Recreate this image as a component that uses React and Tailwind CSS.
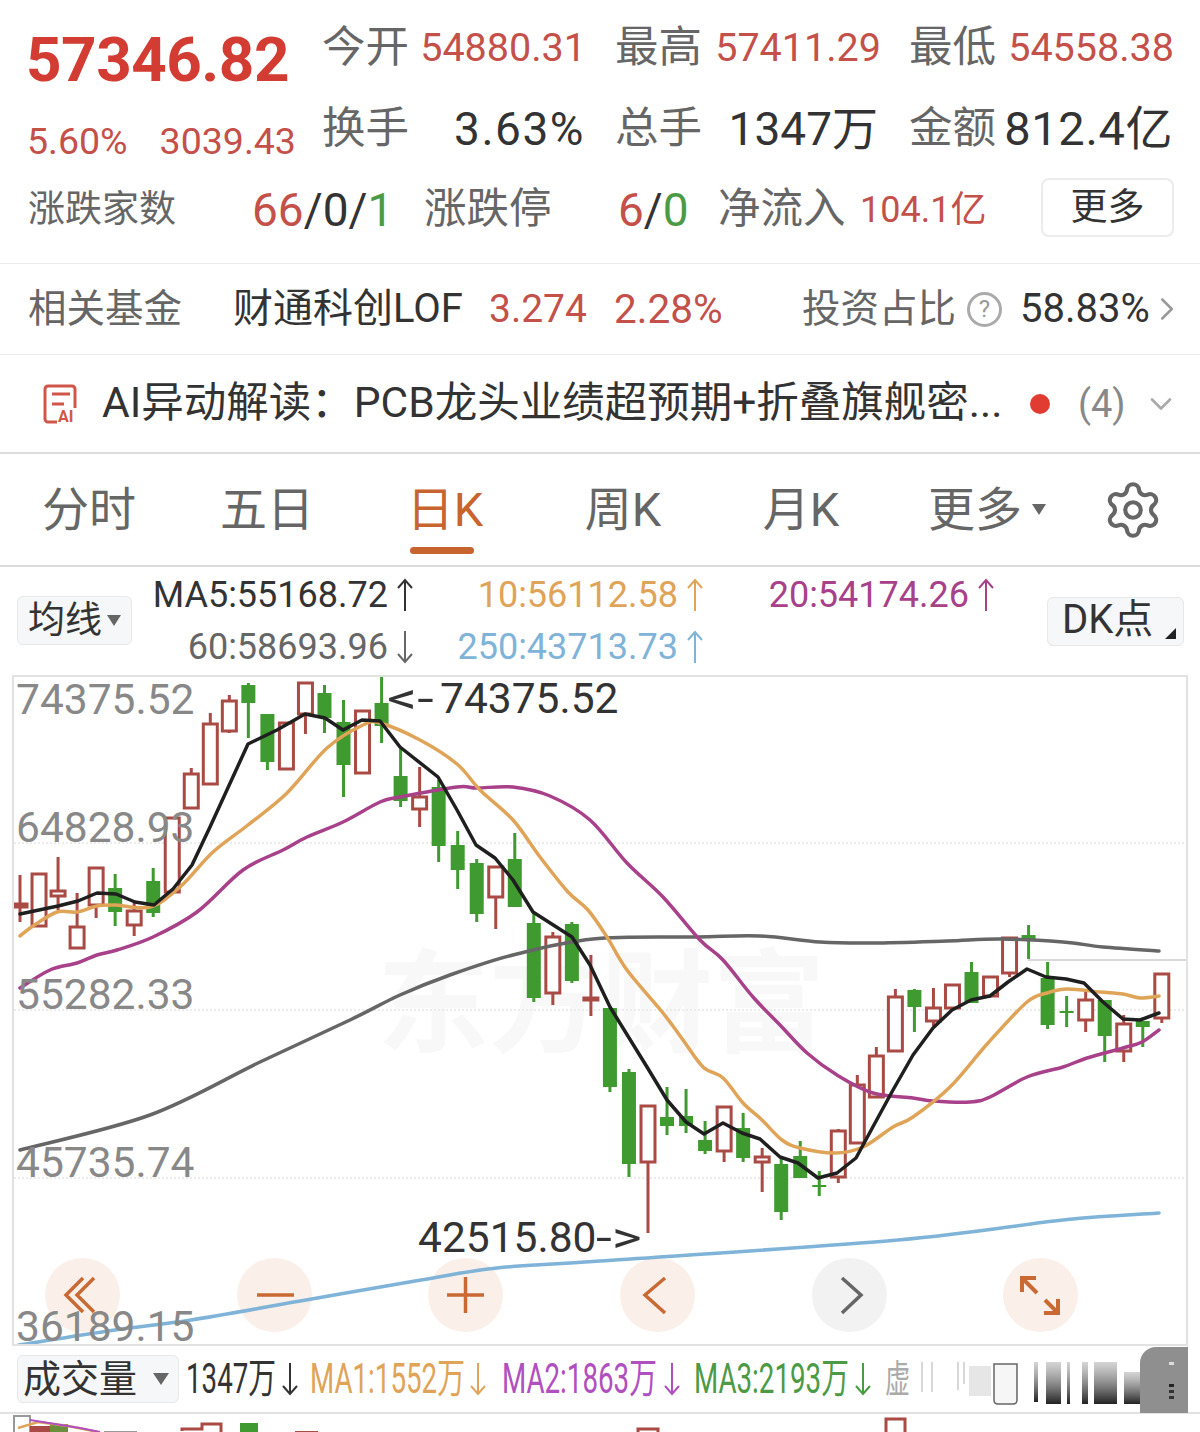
import React from 'react'
import { ChevronDown, ChevronRight, Settings } from 'lucide-react'

// hi, top, bottom, lo, kind (r = red hollow, g = green solid)
const CANDLES = [
  [875, 904, 907, 922, 'r'], [874, 874, 926, 926, 'r'], [857, 891, 896, 910, 'r'], [893, 927, 948, 948, 'r'],
  [868, 868, 905, 918, 'r'], [874, 888, 912, 926, 'g'], [903, 911, 925, 936, 'r'], [868, 881, 913, 917, 'g'],
  [818, 818, 892, 892, 'r'], [768, 774, 808, 808, 'r'], [713, 724, 784, 784, 'r'], [695, 701, 731, 733, 'r'],
  [683, 685, 703, 738, 'g'], [714, 714, 762, 770, 'g'], [723, 723, 769, 769, 'r'], [683, 683, 714, 734, 'r'],
  [685, 693, 718, 733, 'g'], [700, 722, 765, 797, 'g'], [711, 711, 773, 773, 'r'], [675, 703, 726, 743, 'g'],
  [747, 776, 801, 807, 'g'], [767, 797, 809, 827, 'r'], [780, 787, 846, 862, 'g'], [831, 845, 870, 889, 'g'],
  [859, 863, 914, 922, 'g'], [867, 867, 897, 929, 'r'], [833, 859, 907, 907, 'g'], [913, 923, 998, 1002, 'g'],
  [932, 937, 993, 1005, 'r'], [922, 924, 981, 983, 'g'], [955, 998, 1000, 1016, 'r'], [1008, 1008, 1087, 1092, 'g'],
  [1069, 1072, 1164, 1177, 'g'], [1106, 1106, 1162, 1233, 'r'], [1087, 1117, 1126, 1135, 'g'], [1089, 1116, 1126, 1133, 'g'],
  [1121, 1140, 1151, 1154, 'g'], [1107, 1107, 1151, 1162, 'r'], [1113, 1128, 1158, 1162, 'g'], [1148, 1157, 1162, 1192, 'r'],
  [1158, 1164, 1212, 1220, 'g'], [1141, 1156, 1178, 1178, 'g'], [1171, 1185, 1187, 1196, 'g'], [1129, 1131, 1177, 1183, 'r'],
  [1075, 1085, 1143, 1143, 'r'], [1047, 1056, 1097, 1097, 'r'], [989, 997, 1051, 1051, 'r'], [989, 990, 1007, 1032, 'g'],
  [988, 1008, 1021, 1026, 'r'], [984, 985, 1008, 1008, 'r'], [962, 972, 1003, 1003, 'g'], [977, 977, 996, 996, 'r'],
  [938, 938, 973, 977, 'r'], [925, 935, 941, 959, 'g'], [962, 978, 1025, 1029, 'g'], [996, 1011, 1013, 1027, 'g'],
  [992, 1000, 1020, 1032, 'r'], [1000, 1000, 1036, 1062, 'g'], [1015, 1024, 1051, 1062, 'r'], [1021, 1021, 1027, 1047, 'g'],
  [974, 974, 1018, 1023, 'r'],
]

const MA5 = '20,914 39,910 58,906 78,901 97,893 116,894 135,902 154,905 173,889 192,865 210,827 248,744 277,730 305,714 325,718 343,730 362,720 380,721 400,747 438,777 457,810 476,845 495,858 513,880 533,912 572,937 590,965 610,1007 647,1067 667,1100 686,1122 704,1134 723,1123 742,1133 760,1139 780,1157 798,1163 818,1178 837,1173 856,1158 875,1123 893,1090 913,1055 933,1028 952,1010 971,1000 990,996 1008,982 1027,969 1046,977 1066,979 1084,983 1103,1002 1123,1019 1140,1020 1159,1013'
const MA10 = '20,936 33,926 57,912 77,912 97,906 115,905 150,907 180,887 213,852 248,825 287,793 327,748 363,725 380,723 420,740 457,764 480,790 513,820 540,857 568,892 588,910 607,937 627,970 663,1013 683,1040 703,1067 723,1078 743,1103 762,1120 782,1140 800,1148 835,1153 863,1147 893,1127 913,1117 950,1087 988,1043 1027,1002 1047,993 1067,989 1100,992 1123,994 1140,998 1159,996'
const MA20 = '20,988 50,970 77,963 97,955 117,950 153,937 197,912 243,870 283,850 307,837 343,822 380,802 400,797 457,787 477,788 513,787 550,796 590,820 627,863 663,897 700,940 723,960 753,997 780,1025 807,1053 837,1075 873,1093 913,1098 933,1101 970,1102 990,1097 1027,1077 1063,1067 1087,1058 1123,1048 1142,1042 1159,1030'
const MA60 = '20,1150 150,1115 260,1062 350,1020 400,995 450,975 513,955 593,939 697,937 760,936 820,942 873,943 947,941 1000,939 1063,942 1103,947 1159,951'
const MA250 = '19,1345 115,1330 191,1320 306,1300 421,1280 497,1268 600,1261 898,1240 1063,1220 1159,1213'

// catmull-rom through the sampled points so the averages don't look polygonal
function smooth(points) {
  const p = points.split(' ').map(s => s.split(',').map(Number))
  let d = `M${p[0][0]} ${p[0][1]}`
  for (let i = 0; i < p.length - 1; i++) {
    const a = p[i - 1] || p[i]
    const b = p[i]
    const c = p[i + 1]
    const e = p[i + 2] || c
    d += `C${b[0] + (c[0] - a[0]) / 6} ${b[1] + (c[1] - a[1]) / 6} ${c[0] - (e[0] - b[0]) / 6} ${c[1] - (e[1] - b[1]) / 6} ${c[0]} ${c[1]}`
  }
  return d
}

function Cell({ label, value, valueClass, width }) {
  return (
    <div className={`flex ${width} items-center justify-between`}>
      <span className="text-[43.5px] leading-none text-[#666]">{label}</span>
      <span className={valueClass}>{value}</span>
    </div>
  )
}

function Arrow({ up, color }) {
  return (
    <svg className="shrink-0" width="20" height="34" viewBox="0 0 20 34" fill="none" stroke={color} strokeWidth="2">
      {up ? <path d="M10 33V2M3 10l7-8 7 8" /> : <path d="M10 1v31M3 24l7 8 7-8" />}
    </svg>
  )
}

function Legend({ text, up, color, arrow }) {
  return (
    <div className={`flex items-center justify-end gap-[7px] pr-[2px] text-[36px] leading-none ${color}`}>
      <span>{text}</span>
      <Arrow up={up} color={arrow} />
    </div>
  )
}

function VolLegend({ text, color, arrow, width }) {
  return (
    <div className={`flex ${width} items-center justify-between`}>
      <span className={`inline-block w-0 origin-left scale-x-[0.66] whitespace-nowrap text-[42px] leading-none ${color}`}>{text}</span>
      <Arrow color={arrow} />
    </div>
  )
}

function RoundButton({ gray, children }) {
  return (
    <div className={`h-[74px] w-[75px] rounded-full ${gray ? 'bg-[#f2f2f2]' : 'bg-[#fbf0e9]'}`}>
      <svg width="75" height="74" viewBox="0 0 75 74" fill="none" stroke={gray ? '#666' : '#c96a35'} strokeWidth="3.5">
        {children}
      </svg>
    </div>
  )
}

function Chart() {
  return (
    <svg className="block h-full w-full" viewBox="14 677 1172 667" fill="none">
      <g stroke="#e6e6e6" strokeWidth="1.5" strokeDasharray="2 2">
        <path d="M14 843H1186M14 1010H1186M14 1178H1186" />
      </g>
      <path d="M1028 960H1186" stroke="#ccc" strokeWidth="1.5" />
      {CANDLES.map(([hi, top, bot, lo, kind], i) => {
        const x = 20 + 19.03 * i
        const color = kind === 'r' ? '#a94a45' : '#3f9a30'
        return (
          <g key={i}>
            <path d={`M${x} ${hi}V${lo}`} stroke={color} strokeWidth="3" />
            {kind === 'r' ? (
              <rect x={x - 7} y={top} width="14" height={bot - top} fill={bot - top < 4 ? color : '#fff'} stroke={color} strokeWidth="3" />
            ) : (
              <rect x={x - 7} y={top} width="14" height={bot - top} fill={color} />
            )}
          </g>
        )
      })}
      <g strokeWidth="3.5" strokeLinejoin="round" strokeLinecap="round">
        <path d={smooth(MA60)} stroke="#666" />
        <path d={smooth(MA250)} stroke="#7fb3d8" />
        <path d={smooth(MA20)} stroke="#a8408a" />
        <path d={smooth(MA10)} stroke="#e0a458" />
        <polyline points={MA5} stroke="#1f1f1f" />
      </g>
    </svg>
  )
}

export default function App() {
  const red = 'text-[39.5px] leading-none text-[#c4504a]'
  const dark = 'text-[46px] leading-none tracking-[1.5px] text-[#333]'

  return (
    <div className="relative h-[1432px] w-[1200px] overflow-hidden bg-white font-[Roboto,'Noto_Sans_CJK_SC',sans-serif]">
      {/* Quote header */}
      <div className="h-[264px] border-b border-[#ececec] pt-[7px]">
        <div className="flex h-[81px] items-center">
          <div className="w-[322px] pl-[26px] pt-[24px] text-[62px] font-bold leading-none tracking-[-0.5px] text-[#d23c32]">57346.82</div>
          <Cell width="w-[264px] mr-[29px]" label="今开" value="54880.31" valueClass={red} />
          <Cell width="w-[266px] mr-[28px]" label="最高" value="57411.29" valueClass={red} />
          <Cell width="w-[265px]" label="最低" value="54558.38" valueClass={red} />
        </div>
        <div className="flex h-[81px] items-center">
          <div className="flex w-[322px] gap-[32px] pl-[27px] pt-[26px] text-[37.5px] leading-none text-[#c4504a]">
            <span>5.60%</span>
            <span>3039.43</span>
          </div>
          <Cell width="w-[263px] mr-[30px]" label="换手" value="3.63%" valueClass={dark} />
          <Cell width="w-[263px] mr-[31px]" label="总手" value="1347万" valueClass="text-[46px] leading-none text-[#333]" />
          <Cell width="w-[264px]" label="金额" value="812.4亿" valueClass="text-[47px] leading-none tracking-[0.6px] text-[#333]" />
        </div>
        <div className="ml-[28px] grid h-[81px] grid-cols-[224px_172px_194px_100px_142px_181px_133px] items-center">
          <span className="text-[37px] leading-none text-[#666]">涨跌家数</span>
          <span className="text-[46px] leading-none text-[#333]">
            <span className="text-[#c4504a]">66</span>/0/<span className="text-[#4c9a45]">1</span>
          </span>
          <span className="text-[42.5px] leading-none text-[#666]">涨跌停</span>
          <span className="text-[46px] leading-none text-[#333]">
            <span className="text-[#c4504a]">6</span>/<span className="text-[#4c9a45]">0</span>
          </span>
          <span className="text-[42.5px] leading-none text-[#666]">净流入</span>
          <span className="text-[36px] leading-none text-[#c4504a]">104.1亿</span>
          <div className="mb-[4px] flex h-[59px] items-center justify-center rounded-lg border-2 border-[#ececec] text-[37px] leading-none text-[#333]">更多</div>
        </div>
      </div>

      {/* Related fund */}
      <div className="ml-[28px] grid h-[90px] grid-cols-[205px_256px_125px_188px_165px_53px_142px_30px] items-center">
        <span className="text-[38.5px] leading-none text-[#666]">相关基金</span>
        <span className="text-[40px] leading-none text-[#333]">财通科创LOF</span>
        <span className="text-[39px] leading-none text-[#c4504a]">3.274</span>
        <span className="text-[40.5px] leading-none text-[#c4504a]">2.28%</span>
        <span className="text-[38.5px] leading-none text-[#666]">投资占比</span>
        <span className="flex h-[35px] w-[35px] items-center justify-center rounded-full border-[3px] border-[#aaa] text-[24px] leading-none text-[#999]">?</span>
        <span className="text-[40px] leading-none text-[#333]">58.83%</span>
        <ChevronRight size={38} strokeWidth={1.6} className="-ml-[14px] text-[#999]" />
      </div>
      <div className="h-px bg-[#ececec]" />

      {/* AI note */}
      <div className="flex h-[99px] items-center border-b-2 border-[#dcdcdc] pl-[43px]">
        <svg width="34" height="44" viewBox="0 0 34 44" fill="none" stroke="#d0564a" strokeWidth="3">
          <path d="M32 26V7a3 3 0 0 0-3-3H5a3 3 0 0 0-3 3v30a3 3 0 0 0 3 3h9" />
          <path d="M9 12h18M9 22h12" />
          <text x="15" y="40" fontSize="16" fontWeight="700" fill="#d0564a" stroke="none">AI</text>
        </svg>
        <span className="ml-[25px] w-[928px] whitespace-nowrap text-[42.5px] leading-none text-[#333]">AI异动解读：PCB龙头业绩超预期+折叠旗舰密...</span>
        <span className="h-[20px] w-[20px] rounded-full bg-[#e03c31]" />
        <span className="ml-[28px] text-[38px] leading-none text-[#888]">(4)</span>
        <ChevronDown size={36} strokeWidth={1.8} className="ml-[17px] text-[#aaa]" />
      </div>

      {/* Period tabs */}
      <div className="grid h-[113px] grid-cols-[repeat(6,178px)_1fr] items-center border-b-2 border-[#dcdcdc] text-[47px] leading-none text-[#666]">
        <span className="justify-self-center">分时</span>
        <span className="justify-self-center">五日</span>
        <div className="relative justify-self-center text-[#c8642d]">
          日K
          <span className="absolute -bottom-[21px] left-[3px] h-[7px] w-[64px] rounded-full bg-[#c8642d]" />
        </div>
        <span className="justify-self-center">周K</span>
        <span className="justify-self-center">月K</span>
        <div className="flex items-center justify-self-center pl-[16px]">
          更多
          <span className="ml-[10px] h-0 w-0 border-x-[7px] border-t-[11px] border-x-transparent border-t-[#666]" />
        </div>
        <Settings size={62} strokeWidth={1.6} className="ml-[34px] text-[#666]" />
      </div>

      {/* MA legend */}
      <div className="relative flex h-[108px]">
        <div className="ml-[17px] mt-[29px] flex h-[49px] w-[115px] items-center rounded-md border border-[#e8e8e8] bg-[#f6f7f8] pl-[10px] text-[37px] leading-none text-[#333]">
          均线
          <span className="ml-[5px] h-0 w-0 border-x-[7px] border-t-[11px] border-x-transparent border-t-[#666]" />
        </div>
        <div className="ml-[8px] grid h-[108px] grid-cols-[277px_290px_291px] grid-rows-[52px_52px] content-center">
          <Legend text="MA5:55168.72" up color="text-[#333]" arrow="#333" />
          <Legend text="10:56112.58" up color="text-[#e0a458]" arrow="#e0a458" />
          <Legend text="20:54174.26" up color="text-[#a8408a]" arrow="#a8408a" />
          <Legend text="60:58693.96" color="text-[#666]" arrow="#666" />
          <Legend text="250:43713.73" up color="text-[#7fb3d8]" arrow="#7fb3d8" />
        </div>
        <div className="absolute left-[1047px] top-[30px] flex h-[49px] w-[137px] items-center rounded-md border border-[#e8e8e8] bg-[#f6f7f8] pb-[3px] pl-[14px] text-[40px] leading-none text-[#333]">
          DK点
          <span className="absolute bottom-[6px] right-[7px] h-0 w-0 border-b-[11px] border-l-[11px] border-b-[#222] border-l-transparent" />
        </div>
      </div>

      {/* Candlestick chart */}
      <div className="relative ml-[12px] h-[671px] w-[1176px] border-2 border-[#e2e2e2]">
        <div className="absolute left-[363px] top-[273px] whitespace-nowrap text-[112px] font-bold leading-none text-[#f8f8f8]">东方财富</div>
        <div className="absolute left-[31px] top-[581px] flex gap-[116.7px]">
          <RoundButton>
            <path d="M38 20 21 37l17 17M49 20 32 37l17 17" />
          </RoundButton>
          <RoundButton>
            <path d="M20 37h37" />
          </RoundButton>
          <RoundButton>
            <path d="M19 37h37M37.5 19v36" />
          </RoundButton>
          <RoundButton>
            <path d="M45 20 25 37l20 18" />
          </RoundButton>
          <RoundButton gray>
            <path d="M30 20l19 17-19 18" />
          </RoundButton>
          <RoundButton>
            <path strokeWidth="4" d="M33 20H19v14M19 20l15 15M41 55h14V41M55 55 42 42" />
          </RoundButton>
        </div>
        <div className="absolute inset-0">
          <Chart />
        </div>
        <span className="absolute left-[2px] top-[2px] text-[42.5px] leading-none text-[#888]">74375.52</span>
        <span className="absolute left-[2px] top-[130px] text-[42.5px] leading-none text-[#888]">64828.93</span>
        <span className="absolute left-[2px] top-[297px] text-[42.5px] leading-none text-[#888]">55282.33</span>
        <span className="absolute left-[2px] top-[465px] text-[42.5px] leading-none text-[#888]">45735.74</span>
        <span className="absolute left-[2px] top-[629px] text-[42.5px] leading-none text-[#888]">36189.15</span>
        <span className="absolute left-[373px] top-[1px] flex text-[42.5px] leading-none text-[#333]">
          <span className="inline-block w-[53px] origin-left scale-x-[1.4]">&lt;-</span>74375.52
        </span>
        <span className="absolute left-[404px] top-[540px] flex text-[42.5px] leading-none text-[#333]">
          42515.80<span className="inline-block w-[53px] origin-left scale-x-[1.35]">-&gt;</span>
        </span>
      </div>

      {/* Volume header */}
      <div className="relative flex h-[68px] items-center border-b-2 border-[#e2e2e2]">
        <div className="ml-[17px] flex h-[48px] w-[162px] items-center rounded-md border border-[#e8e8e8] bg-[#f6f7f8] pl-[5px] text-[38px] leading-none text-[#333]">
          成交量
          <span className="ml-[16px] h-0 w-0 border-x-[8px] border-t-[12px] border-x-transparent border-t-[#666]" />
        </div>
        <div className="ml-[7px] flex">
          <VolLegend width="w-[114px] mr-[10px]" text="1347万" color="text-[#333]" arrow="#333" />
          <VolLegend width="w-[178px] mr-[14px]" text="MA1:1552万" color="text-[#e0a458]" arrow="#e0a458" />
          <VolLegend width="w-[180px] mr-[12px]" text="MA2:1863万" color="text-[#b04fc0]" arrow="#b04fc0" />
          <VolLegend width="w-[179px]" text="MA3:2193万" color="text-[#4c9a45]" arrow="#4c9a45" />
        </div>
        <span className="ml-[12px] inline-block w-[24px] origin-left scale-x-[0.66] text-[38px] leading-none text-[#aaa]">虚</span>
        <svg className="absolute left-[920px] top-[14px]" width="224" height="46" viewBox="920 1360 224 46">
          <defs>
            <linearGradient id="fade" x1="0" y1="0" x2="0" y2="1">
              <stop offset="0" stopColor="#aaa" stopOpacity="0.5" />
              <stop offset="1" stopColor="#222" />
            </linearGradient>
          </defs>
          <path d="M922 1362v30M932 1362v30M958 1362v28M964 1362v22" stroke="#ccc" strokeWidth="1.5" />
          <rect x="969" y="1366" width="22" height="30" fill="#e6e6e6" />
          <path d="M994 1364h23v36q0 4-4 4h-15q-4 0-4-4z" fill="#f6f6f6" stroke="#666" strokeWidth="1.5" />
          <rect x="1034" y="1362" width="4" height="40" fill="url(#fade)" />
          <rect x="1046" y="1362" width="15" height="42" fill="url(#fade)" />
          <rect x="1067" y="1362" width="3" height="42" fill="url(#fade)" />
          <rect x="1082" y="1362" width="6" height="42" fill="url(#fade)" />
          <rect x="1094" y="1362" width="23" height="42" fill="url(#fade)" />
          <rect x="1124" y="1372" width="20" height="32" fill="url(#fade)" />
        </svg>
        <div className="absolute right-[12px] top-[1px] flex h-[66px] w-[48px] flex-col items-end justify-center gap-[3px] rounded-tl-2xl bg-[#8f8f8f] pr-[14px]">
          <span className="h-[3px] w-[5px] bg-[#ddd]" />
          <span className="mt-[16px] h-[3px] w-[5px] bg-[#222]" />
          <span className="h-[3px] w-[5px] bg-[#333]" />
          <span className="h-[3px] w-[5px] bg-[#333]" />
        </div>
      </div>

      {/* Volume bars, cut off by the screenshot */}
      <svg className="block" width="1200" height="18" viewBox="0 1414 1200 18">
        <rect x="14" y="1416" width="16" height="20" fill="none" stroke="#999" strokeWidth="2" />
        <rect x="30" y="1426" width="20" height="10" fill="#a94a45" />
        <rect x="50" y="1424" width="18" height="10" fill="#6b8f3a" />
        <path d="M18 1428l20-6 30 4 30 6" fill="none" stroke="#e0a458" strokeWidth="2.5" />
        <path d="M30 1420l50 8 20 4" fill="none" stroke="#b04fc0" strokeWidth="2" />
        <rect x="104" y="1431" width="33" height="3" fill="#999" />
        <path d="M182 1431v-2h20v-5h19v8" fill="none" stroke="#a94a45" strokeWidth="3" />
        <rect x="240" y="1423" width="18" height="10" fill="#3f9a30" />
        <rect x="295" y="1431" width="23" height="3" fill="#a94a45" />
        <rect x="638" y="1429" width="20" height="5" fill="none" stroke="#a94a45" strokeWidth="3" />
        <rect x="886" y="1419" width="19" height="16" fill="none" stroke="#a94a45" strokeWidth="3" />
      </svg>
    </div>
  )
}
